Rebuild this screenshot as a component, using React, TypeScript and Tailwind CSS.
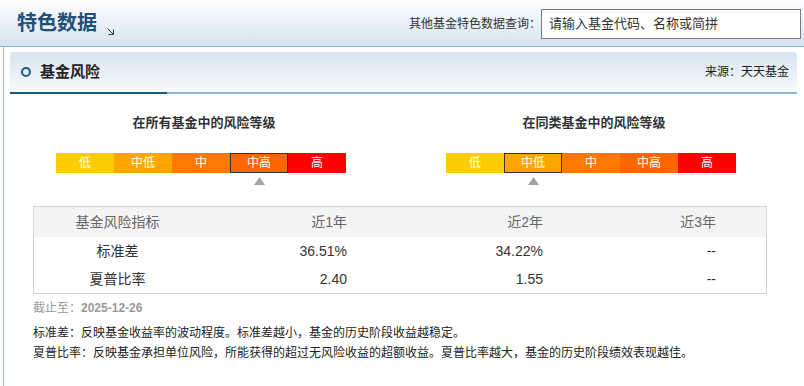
import React from 'react';

type Level = { t: string; c: string };

const LEVELS: Level[] = [
  { t: '低', c: 'bg-[#ffcc00]' },
  { t: '中低', c: 'bg-[#ffa500]' },
  { t: '中', c: 'bg-[#ff7800]' },
  { t: '中高', c: 'bg-[#ff6600]' },
  { t: '高', c: 'bg-[#ff0000]' },
];

function RiskBar({ title, selected }: { title: string; selected: number }) {
  return (
    <div className="flex w-[290px] flex-col items-center">
      <div className="pl-[6px] text-[13px] font-bold leading-[18px] text-[#333]">{title}</div>
      <div className="mt-[21px] flex h-[20px] w-[290px]">
        {LEVELS.map((l, i) => (
          <div
            key={l.t}
            className={
              'flex h-[20px] w-[58px] items-center justify-center text-[12px] leading-none text-white ' +
              l.c +
              (i === selected ? ' border border-[#333]' : '')
            }
          >
            {l.t}
          </div>
        ))}
      </div>
      <div className="mt-[4px] grid h-[8px] w-[290px] grid-cols-5">
        {LEVELS.map((l, i) => (
          <div key={l.t} className="flex justify-center">
            {i === selected ? (
              <svg width="11" height="8" viewBox="0 0 11 8">
                <polygon points="5.5,0 11,8 0,8" fill="#a3a3a3" />
              </svg>
            ) : null}
          </div>
        ))}
      </div>
    </div>
  );
}

export default function App() {
  const rows = [
    ['标准差', '36.51%', '34.22%', '--'],
    ['夏普比率', '2.40', '1.55', '--'],
  ];
  return (
    <div className="h-[386px] w-[804px] overflow-hidden bg-white font-['Liberation_Sans','Noto_Sans_CJK_SC',sans-serif] text-[#333]">
      <header className="flex h-[47px] items-start justify-between border-b border-[#8fb9d5] bg-gradient-to-b from-white to-[#d6e3ef]">
        <div className="flex items-end pl-[17px] pt-[9px]">
          <h1 className="text-[20px] font-bold leading-[28px] text-[#214f78]">特色数据</h1>
          <svg className="mb-[2px] ml-[10px]" width="7" height="7" viewBox="0 0 7 7">
            <path d="M0.5 0.5 L6 6" stroke="#333" strokeWidth="1" fill="none" />
            <path d="M6.5 1.5 V6.5 H1.5" stroke="#333" strokeWidth="1" fill="none" />
          </svg>
        </div>
        <div className="flex items-center pr-[3px] pt-[9px]">
          <span className="text-[12px] text-[#333]">其他基金特色数据查询：</span>
          <div className="flex h-[30px] w-[260px] items-center border border-[#7a7a7a] bg-white pl-[7px] text-[13px] text-[#333]">
            请输入基金代码、名称或简拼
          </div>
        </div>
      </header>

      <div className="ml-[3px] h-[339px] border-l border-[#9cc0da] pl-[6px] pr-[7px] pt-[5px]">
        <div className="flex flex-col rounded-t-[3px] bg-gradient-to-b from-[#d9e4ef] to-[#f9fbfd]">
          <div className="flex h-[40px] items-center justify-between">
            <div className="flex items-center pl-[11px]">
              <div className="h-[10px] w-[10px] rounded-full border-2 border-[#1b5a86]" />
              <span className="ml-[9px] text-[15px] font-bold text-[#222]">基金风险</span>
            </div>
            <span className="pr-[8px] text-[12px] text-[#222]">来源：天天基金</span>
          </div>
          <div className="flex h-[2px]">
            <div className="w-[157px] bg-[#1b5a86]" />
            <div className="flex-1 bg-[#8cb6d3]" />
          </div>
        </div>

        <div className="mt-[20px] flex gap-[100px] pl-[46px]">
          <RiskBar title="在所有基金中的风险等级" selected={3} />
          <RiskBar title="在同类基金中的风险等级" selected={1} />
        </div>

        <div className="ml-[23px] mt-[21px] w-[734px] border border-[#d3d3d3] text-[14px]">
          <div className="grid h-[30px] grid-cols-[167px_146px_196px_173px] items-center bg-[#f4f4f4] text-[#666]">
            <div className="text-center">基金风险指标</div>
            <div className="text-right">近1年</div>
            <div className="text-right">近2年</div>
            <div className="text-right">近3年</div>
          </div>
          {rows.map((r) => (
            <div key={r[0]} className="grid h-[28px] grid-cols-[167px_146px_196px_173px] items-center text-[#333]">
              <div className="text-center">{r[0]}</div>
              <div className="text-right">{r[1]}</div>
              <div className="text-right">{r[2]}</div>
              <div className="text-right">{r[3]}</div>
            </div>
          ))}
        </div>

        <div className="ml-[23px] mt-[6px] text-[12px] leading-[16px] text-[#999]">
          截止至：<span className="font-bold">2025-12-26</span>
        </div>
        <div className="ml-[23px] mt-[7px] text-[12px] leading-[20px] text-[#222]">
          <div>标准差：反映基金收益率的波动程度。标准差越小，基金的历史阶段收益越稳定。</div>
          <div>夏普比率：反映基金承担单位风险，所能获得的超过无风险收益的超额收益。夏普比率越大，基金的历史阶段绩效表现越佳。</div>
        </div>
      </div>
    </div>
  );
}
